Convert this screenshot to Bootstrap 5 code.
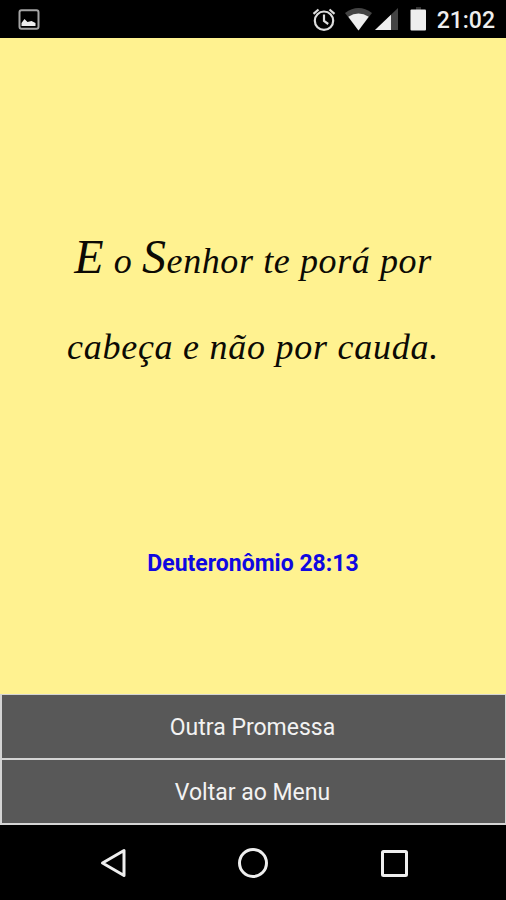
<!DOCTYPE html>
<html lang="pt-BR">
<head>
<meta charset="utf-8">
<meta name="viewport" content="width=device-width, initial-scale=1">
<title>Promessas</title>
<link href="https://cdn.jsdelivr.net/npm/bootstrap@5.3.0/dist/css/bootstrap.min.css" rel="stylesheet">
<style>
body{height:900px;overflow:hidden;background:#000;font-family:Roboto,sans-serif}
.statusbar{height:38px;padding:0 11px 0 18px}
.clock{font-size:23px;font-weight:500;line-height:36px;color:#eee;margin-left:10px;padding-top:3px}
.promise{height:656px;background:#fff290;padding-top:180px}
.verse{font-family:"Liberation Serif",serif;font-style:italic;font-size:36px;line-height:86px;letter-spacing:.75px;color:#0c0a04;white-space:nowrap;height:172px}
.verse .first{letter-spacing:.6px}
.initial{font-size:48px;line-height:0}
.source{margin-top:157px;font-size:23px;line-height:34px;font-weight:700;color:#1008e0}
.actions{height:131px;background:#d4d4d4;padding:1px 1px 2px 2px;gap:2px}
.actions .btn{background:#585858;color:#f2f2f2;font-size:23px;line-height:30px;padding:2px 2px 0 0}
.navkeys{height:75px;padding:0 96px}
</style>
<script src="https://cdn.jsdelivr.net/npm/bootstrap@5.3.0/dist/js/bootstrap.bundle.min.js"></script>
</head>
<body class="d-flex flex-column">
<header class="statusbar d-flex align-items-center flex-shrink-0">
  <svg width="22" height="38" viewBox="18 0 22 38"><rect x="19.5" y="10.2" width="19" height="18.6" rx="2" fill="none" stroke="#a5a5a5" stroke-width="2"/><path d="M21.5 26v-3l3-4 3 3 4-1 4 2v3z" fill="#eee"/></svg>
  <svg class="ms-auto" width="116" height="38" viewBox="311 0 116 38"><g fill="none" stroke="#ddd" stroke-width="2.2"><circle cx="324" cy="20.7" r="9.2"/><path d="M324 14.5v6.500l4.200 3M313.500 13.800l5-4.300M334.500 13.800l-5-4.300"/></g><path d="M345 13Q358.500 3 372 13L358.500 30.500z" fill="#444"/><path d="M348.300 16.800Q358.500 10 368.700 16.800L358.500 30.500z" fill="#eee"/><path d="M398 8v22h-23z" fill="#444"/><path d="M391 14.700V30h-16z" fill="#eee"/><path d="M416 7h5v3h-5z" fill="#333"/><rect x="410.500" y="9.500" width="15.500" height="21" rx="1" fill="#eee"/></svg>
  <span class="clock">21:02</span>
</header>
<main class="promise text-center flex-shrink-0">
  <p class="verse mb-0"><span class="first"><span class="initial">E</span> o <span class="initial">S</span>enhor te porá por</span><br>cabeça e não por cauda.</p>
  <p class="source mb-0">Deuteronômio 28:13</p>
</main>
<div class="actions d-flex flex-column flex-shrink-0">
  <button type="button" class="btn border-0 rounded-0 w-100 flex-fill">Outra Promessa</button>
  <button type="button" class="btn border-0 rounded-0 w-100 flex-fill">Voltar ao Menu</button>
</div>
<footer class="navkeys d-flex justify-content-between align-items-center flex-shrink-0">
  <svg width="32" height="32" viewBox="0 0 32 32" fill="none" stroke="#eee" stroke-width="3" stroke-linejoin="round"><path d="M28 3.500v25L6.500 16z"/></svg>
  <svg width="32" height="32" viewBox="0 0 32 32" fill="none" stroke="#eee" stroke-width="3"><circle cx="16" cy="16" r="13.500"/></svg>
  <svg width="32" height="32" viewBox="0 0 32 32" fill="none" stroke="#eee" stroke-width="3"><rect x="4.500" y="4.500" width="24" height="24" rx="1"/></svg>
</footer>
</body>
</html>
